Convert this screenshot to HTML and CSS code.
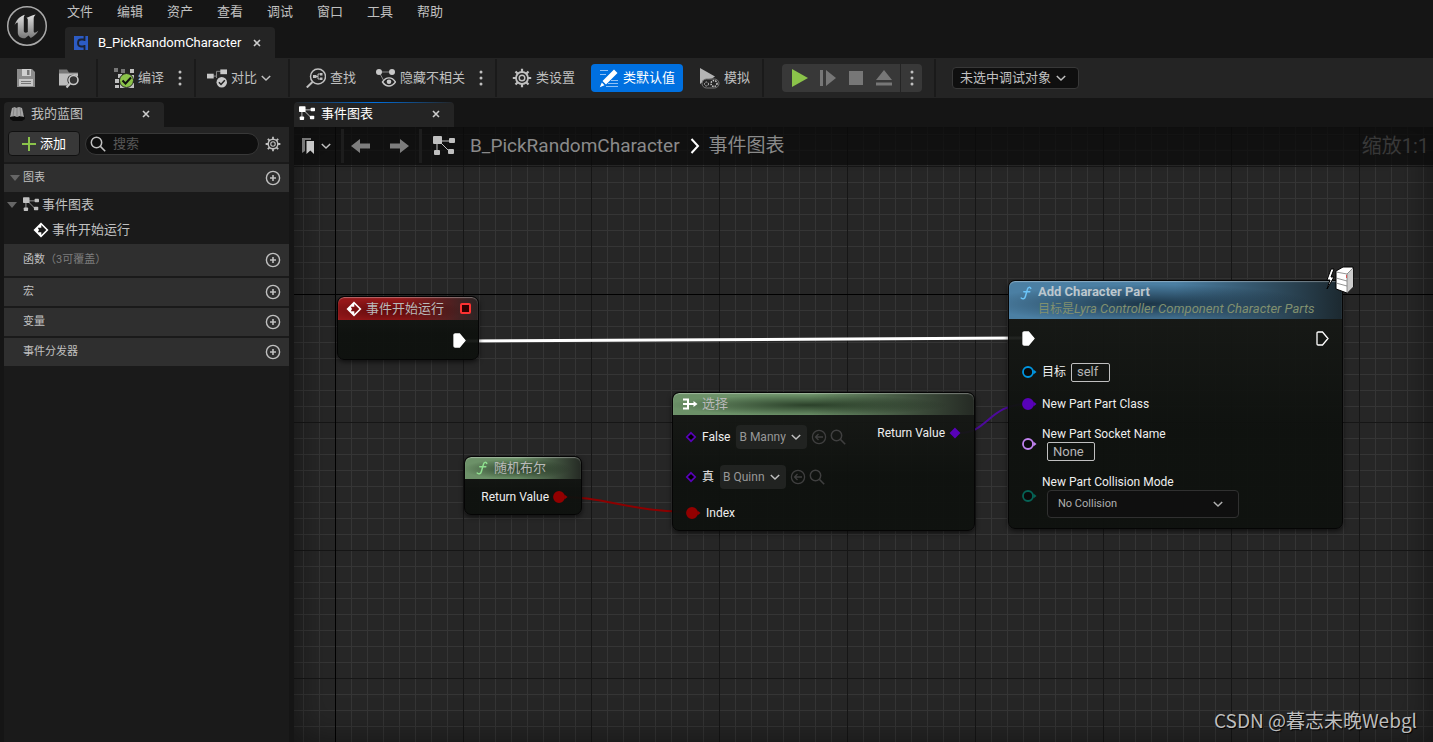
FILE: index.html
```html
<!DOCTYPE html>
<html lang="zh-CN">
<head>
<meta charset="utf-8">
<meta name="viewport" content="width=device-width, initial-scale=1">
<title>B_PickRandomCharacter</title>
<link rel="stylesheet" href="styles.css">
</head>
<body>
<svg class="sprite" aria-hidden="true">
  <symbol id="chevron" viewBox="0 0 10 10"><path d="M.8 3l4.200 4L9.200 3" fill="none" stroke="currentColor" stroke-width="1.500"/></symbol>
  <symbol id="close" viewBox="0 0 8 8"><path d="M1 1l6 6M7 1L1 7" stroke="currentColor" stroke-width="1.600"/></symbol>
  <symbol id="dots" viewBox="0 0 4 16"><circle cx="2" cy="2" r="1.500"/><circle cx="2" cy="8" r="1.500"/><circle cx="2" cy="14" r="1.500"/></symbol>
  <symbol id="graph" viewBox="0 0 22 20"><path d="M5 4l12 12M5 5h13M4 5v12" stroke="currentColor" fill="none" stroke-width="1"/><rect x="0" y="0" width="9" height="8" rx="1"/><rect x="16" y="2" width="6" height="5" rx="1"/><rect x="1" y="14" width="6" height="5" rx="1"/><rect x="15" y="13" width="6" height="5" rx="1"/></symbol>
  <symbol id="plus" viewBox="0 0 16 16"><circle cx="8" cy="8" r="6.600" fill="none" stroke="currentColor" stroke-width="1.400"/><path d="M8 5v6M5 8h6" stroke="currentColor" stroke-width="1.600"/></symbol>
  <symbol id="gear" viewBox="0 0 20 20"><g fill="none" stroke="currentColor"><circle cx="10" cy="10" r="6" stroke-width="1.800"/><circle cx="10" cy="10" r="2.800" stroke-width="1.400"/><path d="M10 .8v3.200M10 16v3.200M.8 10H4M16 10h3.200M3.500 3.500l2.300 2.300M14.200 14.200l2.300 2.300M3.500 16.500l2.300-2.300M14.200 5.800l2.300-2.300" stroke-width="2.200"/></g></symbol>
  <symbol id="search" viewBox="0 0 16 16"><g fill="none" stroke="currentColor" stroke-width="1.500"><circle cx="6.500" cy="6.500" r="5.200"/><path d="M10.400 10.400l4.800 4.800"/></g></symbol>
  <symbol id="back" viewBox="0 0 16 16"><g fill="none" stroke="currentColor" stroke-width="1.300"><circle cx="8" cy="8" r="6.600"/><path d="M12 8H5M7.500 5L4.500 8l3 3"/></g></symbol>
  <symbol id="event" viewBox="0 0 16 16"><path fill-rule="evenodd" d="M8 .5L15.500 8 8 15.500.5 8zM8.300 3L13.300 8l-5 5v-2.800H4.800L6 8 4.800 5.800h3.500z"/></symbol>
  <symbol id="func" viewBox="0 0 12 14"><path d="M10.800 2.400C10 .7 8 1 7.400 3.400L5.300 10.700C4.600 13 2.800 13.500 1.200 12M3.800 5.800h6" fill="none" stroke="currentColor" stroke-width="1.500" stroke-linecap="round"/></symbol>
  <symbol id="exec" viewBox="0 0 13 15"><path d="M1 2.200Q1 1 2.200 1H6.500L12 7.500 6.500 14H2.200Q1 14 1 12.800z" stroke="currentColor" stroke-width="1.300"/></symbol>
  <symbol id="pin" viewBox="0 0 16 14"><circle cx="7" cy="7" r="5" stroke="currentColor" stroke-width="1.800"/><path d="M12.400 4.500L15.500 7l-3.100 2.500z" fill="currentColor"/></symbol>
  <symbol id="diamond" viewBox="0 0 12 12"><path d="M6 1.800L10.200 6 6 10.200 1.800 6z" stroke="currentColor" stroke-width="1.700"/></symbol>
</svg>

<header class="titlebar">
  <svg class="logo" viewBox="0 0 42 42" aria-label="Unreal Engine">
    <defs><linearGradient id="metal" x2="0" y2="1"><stop stop-color="#e2e2e2"/><stop offset="1" stop-color="#777"/></linearGradient></defs>
    <circle cx="21" cy="21" r="19.300" fill="#1b1b1b" stroke="#a9a9a9" stroke-width="1.500"/>
    <path fill="url(#metal)" d="M8.500 20.500C10.500 14 14.800 11 19 9.800c-1.300 1.600-1.200 2.600-1.200 4.200V26c0 2 2.600 2.200 4 .9V14.700c0-1.200-.8-1.800-1.700-1.700 2.500-1 5.700-2.800 9.500-3.600-1.600 1.600-1.900 2.800-1.900 4.600V26.500c0 1.700 1.800 1.500 4.600-.7-1.500 3.200-4.200 5.100-7.500 7.200l-2.300-2.500-3.400 2.800c-4 .2-7-1.800-7.300-5.300V18.500c0-1.600-1.400-1.200-3.300 2z"/>
  </svg>
  <div class="title-main">
    <nav class="menu" aria-label="主菜单">
      <button>文件</button><button>编辑</button><button>资产</button><button>查看</button><button>调试</button><button>窗口</button><button>工具</button><button>帮助</button>
    </nav>
    <div class="asset-tab">
      <svg class="i14" viewBox="0 0 14 14"><path fill="#2c5bc4" d="M0 0h14v14H0z"/><path d="M10 3.500H7Q4 3.500 4 7t3 3.500h3M10.500 0v5M10.500 9v5" fill="none" stroke="#1b2233" stroke-width="1.800"/></svg>
      <span>B_PickRandomCharacter</span>
      <button class="close" aria-label="关闭"><svg><use href="#close"/></svg></button>
    </div>
  </div>
</header>

<div class="toolbar" role="toolbar">
  <div class="group g-file">
    <button aria-label="保存"><svg class="i18" viewBox="0 0 18 18"><path fill="#8c8c8c" d="M0 0h15l3 3v15H0z"/><path fill="#d0d0d0" d="M5 0h9v7H5z"/><path fill="#777" d="M10 1h2.500v5H10z"/><path fill="#c8c8c8" d="M2 10h14v7H2z"/><path stroke="#777" d="M4 12.500h10M4 14.500h10"/></svg></button>
    <button aria-label="浏览"><svg class="i21" viewBox="0 0 21 20"><path fill="#777" d="M0 1h8l2 3h9v3H0z"/><path fill="#bdbdbd" d="M0 5h19v3l-5-2c-5 0-7 5-4.500 9L8 17H0z"/><circle cx="14.500" cy="11.500" r="4.500" fill="#333" stroke="#c8c8c8" stroke-width="1.600"/><path stroke="#c8c8c8" stroke-width="2" d="M11 15l-3.500 4"/></svg></button>
  </div>
  <div class="group g-compile">
    <button class="tool"><svg class="i20" viewBox="0 0 20 20"><path fill="#777" d="M0 0h4v4H0zM7 1h4v4H7z"/><path fill="#c0c0c0" d="M16 1h4v4h-4zM4 6h4v4H4zM16 7h4v4h-4zM1 11h4v4H1zM1 17h4v3H1zM6 15h14v5H6zM10 6h5v4h-5z"/><circle cx="12.500" cy="12.500" r="7" fill="#8bc34a" stroke="#242424"/><path d="M8.500 12.500l3 3 5.500-6" fill="none" stroke="#111" stroke-width="2"/></svg>编译</button>
    <button class="more" aria-label="编译选项"><svg><use href="#dots"/></svg></button>
  </div>
  <div class="group g-diff">
    <button class="tool"><svg class="i20" viewBox="0 0 21 20"><path stroke="#888" fill="none" d="M5 8h5V3h5M10 6v4"/><rect y="5.500" width="7" height="5" fill="#c8c8c8"/><rect x="14" y="1" width="7" height="5" fill="#c8c8c8"/><circle cx="15.500" cy="14.500" r="5.500" fill="#c8c8c8"/><path d="M12.500 14.500l2.200 2.300 4-4.500" fill="none" stroke="#222" stroke-width="1.600"/></svg>对比<svg class="chev"><use href="#chevron"/></svg></button>
  </div>
  <div class="group g-find">
    <button class="tool"><svg class="i20" viewBox="0 0 20 20"><g fill="none" stroke="#c0c0c0" stroke-width="1.500"><circle cx="12" cy="8.500" r="7.500"/><path d="M6.500 14L.8 19.500" stroke-width="2"/><path d="M10 8.500h2V6h2.500M12 8.500V11h2.500" stroke-width="1"/></g><path fill="#c0c0c0" d="M7 7h3.500v3H7zM14 5h2.500v2.500H14zM14 9.500h2.500V12H14z"/></svg>查找</button>
    <button class="tool"><svg class="i20" viewBox="0 0 20 20"><path stroke="#888" fill="none" d="M3 4h13M3 4l5 9"/><circle cx="3" cy="4" r="3" fill="#c8c8c8"/><circle cx="16" cy="4" r="3" fill="#c8c8c8"/><path d="M6.500 14c3.500-5.500 9.500-5.500 13 0-3.500 5.300-9.500 5.300-13 0z" fill="#242424" stroke="#c8c8c8" stroke-width="1.400"/><circle cx="13" cy="13.800" r="2.300" fill="#c8c8c8"/></svg>隐藏不相关</button>
    <button class="more" aria-label="隐藏选项"><svg><use href="#dots"/></svg></button>
  </div>
  <div class="group g-class">
    <button class="tool"><svg class="i20"><use href="#gear"/></svg>类设置</button>
    <button class="tool primary"><svg class="i20" viewBox="0 0 20 20"><path stroke="#8fc0f6" d="M1 2.500h8M1 6.500h6M12 12.500h7M9 15.500h10M7 18.500h12"/><path fill="#fff" d="M15 1.500L18.500 5 7 16.500 3.500 13zM2.800 14.500L5.500 17.300.8 19.200z"/></svg>类默认值</button>
    <button class="tool"><svg class="i21" viewBox="0 0 21 21"><path fill="#b4b4b4" d="M1 0l15 8.500-3 2-6 1-6 4.500z"/><rect x="3" y="11" width="17" height="9" rx="4.500" fill="#242424" stroke="#777"/><g fill="none" stroke="#c8c8c8"><circle cx="7.500" cy="16" r="2" stroke-dasharray="1.500 1"/><circle cx="15" cy="15.500" r="3" stroke-dasharray="1.500 1" stroke-width="1.500"/></g></svg>模拟</button>
  </div>
  <div class="group g-play">
    <div class="play">
      <button aria-label="运行"><svg class="i18" viewBox="0 0 18 18"><path fill="#8bc34a" d="M1 0l16 9L1 18z"/></svg></button>
      <button aria-label="步进"><svg class="i16" viewBox="0 0 16 16"><path fill="#777" d="M0 0h3v16H0zM6 0l10 8-10 8z"/></svg></button>
      <button aria-label="停止"><svg class="i14" viewBox="0 0 14 14"><path fill="#777" d="M0 0h14v14H0z"/></svg></button>
      <button aria-label="弹出"><svg class="i16" viewBox="0 0 16 16"><path fill="#777" d="M8 0l8 10H0zM0 12.500h16v3H0z"/></svg></button>
      <button class="play-more" aria-label="运行选项"><svg><use href="#dots"/></svg></button>
    </div>
  </div>
  <label class="debug"><select aria-label="调试对象"><option>未选中调试对象</option></select><svg class="chev"><use href="#chevron"/></svg></label>
</div>

<main class="dock">
  <aside class="panel">
    <div class="tab"><svg class="i16" viewBox="0 0 16 16"><path fill="#0b0b0b" d="M1 8h14l1 5-3 2H4l-3-2z"/><path fill="#a5a5a5" d="M3 2l3-1 1 1 3-1 3 1 2 9-4-1-3 1-3-1-4 1z"/><path stroke="#777" stroke-width=".7" d="M5 2L4 11M8 2v9M11 2l1 9"/></svg><span>我的蓝图</span><button class="close" aria-label="关闭"><svg><use href="#close"/></svg></button></div>
    <div class="panel-tools">
      <button class="add"><svg class="i14" viewBox="0 0 14 14"><path d="M7 0v14M0 7h14" stroke="#8bc34a" stroke-width="2"/></svg>添加</button>
      <label class="search"><svg class="i16"><use href="#search"/></svg><input type="text" placeholder="搜索" aria-label="搜索"></label>
      <button aria-label="设置"><svg class="i16"><use href="#gear"/></svg></button>
    </div>
    <div class="section"><svg class="tri" viewBox="0 0 10 6"><path d="M0 0h10L5 6z"/></svg><span>图表</span><button aria-label="添加图表"><svg class="i16"><use href="#plus"/></svg></button></div>
    <ul class="tree">
      <li><svg class="tri" viewBox="0 0 10 6"><path d="M0 0h10L5 6z"/></svg><svg class="g-icon"><use href="#graph"/></svg>事件图表</li>
      <li class="child"><svg class="i16 white"><use href="#event"/></svg>事件开始运行</li>
    </ul>
    <div class="section tall"><span>函数<span class="note">（3可覆盖）</span></span><button aria-label="添加函数"><svg class="i16"><use href="#plus"/></svg></button></div>
    <div class="section"><span>宏</span><button aria-label="添加宏"><svg class="i16"><use href="#plus"/></svg></button></div>
    <div class="section"><span>变量</span><button aria-label="添加变量"><svg class="i16"><use href="#plus"/></svg></button></div>
    <div class="section"><span>事件分发器</span><button aria-label="添加事件分发器"><svg class="i16"><use href="#plus"/></svg></button></div>
  </aside>

  <section class="editor">
    <div class="tab active"><svg class="g-icon"><use href="#graph"/></svg><span>事件图表</span><button class="close" aria-label="关闭"><svg><use href="#close"/></svg></button></div>
    <div class="canvas">
      <svg class="wires" aria-hidden="true">
        <path class="wire exec-wire" d="M171 214L728 211"/>
        <path class="wire bool-wire" d="M272 370C310 370 340 385 396 385"/>
        <path class="wire class-wire" d="M666 306C694 306 695 277 734 277"/>
      </svg>

      <article class="node n-event">
        <h3 class="red"><svg class="i16 white"><use href="#event"/></svg><span>事件开始运行</span><i class="delegate"></i></h3>
        <div class="out-exec"><svg class="exec full"><use href="#exec"/></svg></div>
      </article>

      <article class="node n-random">
        <h3 class="green"><svg class="fn"><use href="#func"/></svg><span>随机布尔</span></h3>
        <div class="ret">Return Value<svg class="pin full p-bool"><use href="#pin"/></svg></div>
      </article>

      <article class="node n-select">
        <h3 class="green"><svg class="merge" viewBox="0 0 15 12"><path d="M0 1.500h5v9H0M0 6h9" fill="none" stroke="#fff" stroke-width="2"/><path fill="#fff" d="M10.500 3L14.500 6l-4 3V7H9V5h1.500z"/></svg><span>选择</span></h3>
        <div class="select-body">
          <div class="options">
            <div class="row"><svg class="dia p-class"><use href="#diamond"/></svg><label for="false">False</label><span class="asset"><select id="false"><option>B Manny</option></select><svg class="chev"><use href="#chevron"/></svg></span><button aria-label="使用所选资产"><svg class="i16"><use href="#back"/></svg></button><button aria-label="浏览资产"><svg class="i16"><use href="#search"/></svg></button></div>
            <div class="row"><svg class="dia p-class"><use href="#diamond"/></svg><label for="true">真</label><span class="asset"><select id="true"><option>B Quinn</option></select><svg class="chev"><use href="#chevron"/></svg></span><button aria-label="使用所选资产"><svg class="i16"><use href="#back"/></svg></button><button aria-label="浏览资产"><svg class="i16"><use href="#search"/></svg></button></div>
            <div class="row index"><svg class="pin full p-bool"><use href="#pin"/></svg>Index</div>
          </div>
          <div class="result">Return Value<svg class="dia full p-class"><use href="#diamond"/></svg></div>
        </div>
      </article>

      <article class="node n-add">
        <h3 class="blue"><svg class="fn"><use href="#func"/></svg><span><b>Add Character Part</b><small>目标是<i>Lyra Controller Component Character Parts</i></small></span></h3>
        <div class="exec-row"><svg class="exec full"><use href="#exec"/></svg><svg class="exec"><use href="#exec"/></svg></div>
        <div class="prop self"><svg class="pin p-obj"><use href="#pin"/></svg><label for="self">目标</label><input id="self" class="w-self" type="text" value="self"></div>
        <div class="prop cls"><svg class="pin full p-class"><use href="#pin"/></svg><span>New Part Part Class</span></div>
        <div class="prop sock"><svg class="pin p-name"><use href="#pin"/></svg><div><label for="socket">New Part Socket Name</label><input id="socket" class="w-none" type="text" value="None"></div></div>
        <div class="prop coll"><svg class="pin p-enum"><use href="#pin"/></svg><div><label for="mode">New Part Collision Mode</label><span class="mode"><select id="mode"><option>No Collision</option></select><svg class="chev"><use href="#chevron"/></svg></span></div></div>
        <svg class="server" viewBox="0 0 28 28"><path fill="#fff" stroke="#000" d="M5 3L1 14h3L1 23 8 11H5l3-8z"/><path fill="#fff" stroke="#000" d="M10 5l7-4h10v20l-6 6-11-4z"/><path fill="#ccc" d="M21 8l6-6v19l-6 6z"/><path stroke="#777" stroke-width=".8" fill="none" d="M10 6l11 2v18M10 12l11 3M10 17l11 3M21 8l6-6"/><path stroke="#d55" d="M20.500 9v3"/></svg>
      </article>

      <div class="vignette"></div>
      <nav class="crumbs" aria-label="图表导航">
        <button class="bookmark" aria-label="书签"><svg viewBox="0 0 13 16"><path fill="#777" d="M0 0h9v2H3v11l-3 2z"/><path fill="#c8c8c8" d="M4.500 3H12v13l-3.700-3.500L4.500 16z"/></svg><svg class="chev"><use href="#chevron"/></svg></button>
        <button class="nav-arrow" aria-label="后退"><svg viewBox="0 0 19 14"><path d="M0 7l9-7v4.500h10v5H9V14z"/></svg></button>
        <button class="nav-arrow next" aria-label="前进"><svg viewBox="0 0 19 14"><path d="M19 7l-9-7v4.500H0v5h10V14z"/></svg></button>
        <span class="path"><svg class="g-big"><use href="#graph"/></svg><a href="#">B_PickRandomCharacter</a><svg class="gt" viewBox="0 0 10 16"><path d="M1.500 1l6.500 7-6.500 7" fill="none" stroke="#fff" stroke-width="2"/></svg><a href="#">事件图表</a></span>
        <span class="zoom">缩放1:1</span>
      </nav>
      <div class="watermark">CSDN @暮志未晚Webgl</div>
    </div>
  </section>
</main>
</body>
</html>
```
FILE: styles.css
```css
* { box-sizing: border-box; }
body {
  margin: 0;
  height: 100vh;
  display: flex;
  flex-direction: column;
  overflow: hidden;
  background: #151515;
  color: #c0c0c0;
  font: 13px/20px Roboto, "Noto Sans CJK SC", sans-serif;
}
button, select, input { font: inherit; color: inherit; border: 0; padding: 0; margin: 0; background: none; }
select { appearance: none; outline: 0; }
input { outline: 0; min-width: 0; }
button { display: flex; align-items: center; flex: none; white-space: nowrap; }
svg { display: block; flex: none; fill: currentColor; }
h3, ul { margin: 0; padding: 0; list-style: none; font-weight: 400; font-size: 13px; }
.sprite { position: absolute; width: 0; height: 0; }
.i14 { width: 14px; height: 14px; }
.i16 { width: 16px; height: 16px; }
.i18 { width: 18px; height: 18px; }
.i20 { width: 20px; height: 20px; }
.i21 { width: 21px; height: 21px; }
.chev { width: 10px; height: 10px; pointer-events: none; }
.white { color: #fff; }
.close svg { width: 8px; height: 8px; }

/* Title bar */
.titlebar { display: flex; height: 58px; flex: none; }
.logo { width: 42px; height: 42px; margin: 5px 17px 0 6px; }
.title-main { display: flex; flex-direction: column; justify-content: space-between; }
.menu { display: flex; gap: 24px; padding: 2px 2px 0; }
.asset-tab {
  display: flex;
  align-items: center;
  width: 210px;
  height: 31px;
  padding: 0 14px 0 9px;
  background: #242424;
  border-radius: 4px 4px 0 0;
  color: #fff;
}
.asset-tab span { margin: 0 auto 0 10px; }
.asset-tab .close { color: #ccc; }

/* Toolbar */
.toolbar { display: flex; align-items: center; height: 40px; flex: none; background: #242424; }
.group { display: flex; align-items: center; height: 38px; border-right: 2px solid #1a1a1a; }
.tool { gap: 4px; }
.more svg, .play-more svg { width: 4px; height: 16px; }
.g-file { padding: 0 16px 0 17px; gap: 24px; }
.g-compile { padding: 0 12px 0 16px; gap: 14px; }
.g-diff { padding: 0 17px 0 11px; }
.g-find { padding: 0 12px 0 16px; }
.g-find .tool + .tool { margin: 0 14px 0 20px; }
.g-class { padding: 0 12px 0 15px; gap: 16px; }
.primary { height: 28px; padding: 0 8px; border-radius: 4px; background: #0070e0; color: #fff; }
.g-play { padding: 0 12px 0 18px; }
.play { display: flex; height: 28px; padding-left: 4px; background: #383838; border-radius: 4px; }
.play button { width: 28px; justify-content: center; }
.play .play-more { width: 22px; margin-left: 2px; border-left: 1px solid #242424; }
.debug {
  display: flex;
  align-items: center;
  gap: 4px;
  height: 22px;
  margin-left: 16px;
  padding: 0 12px 0 7px;
  background: #0f0f0f;
  border: 1px solid #383838;
  border-radius: 4px;
}

/* Docked panels */
.dock { display: flex; flex: 1; min-height: 0; gap: 5px; padding: 4px 0 0 4px; }
.panel { width: 285px; flex: none; background: #1a1a1a linear-gradient(#151515, #151515) 0 0 / 100% 25px no-repeat; }
.tab {
  display: flex;
  align-items: center;
  width: 160px;
  height: 25px;
  padding: 0 14px 2px 5px;
  background: #242424;
  border-radius: 4px 4px 0 0;
}
.tab span { margin: 0 auto 0 6px; }
.tab.active { color: #fff; background: linear-gradient(90deg, #242424, #0070e0, #242424) 0 0 / 100% 1px no-repeat #242424; }
.tab .close { color: #ccc; }
.panel-tools { display: flex; align-items: center; height: 35px; padding: 0 8px 2px 4px; background: #242424; }
.add {
  gap: 4px;
  width: 72px;
  height: 25px;
  justify-content: center;
  color: #fff;
  background: #383838;
  border: 1px solid #111;
  border-radius: 4px;
}
.search {
  display: flex;
  flex: 1;
  align-items: center;
  gap: 7px;
  min-width: 0;
  height: 22px;
  margin: 0 6px 0 5px;
  padding-left: 4px;
  background: #0f0f0f;
  border: 1px solid #383838;
  border-radius: 11px;
}
.search input { flex: 1; }
.search input::placeholder { color: #575757; }
.tri { width: 10px; height: 6px; color: #666; }
.section {
  display: flex;
  align-items: center;
  justify-content: space-between;
  height: 28px;
  margin-top: 2px;
  padding: 0 8px 0 19px;
  background: #2f2f2f;
  font-size: 11px;
}
.section .tri { margin-left: -13px; margin-right: 3px; }
.section .tri + span { margin-right: auto; }
.note { color: #7d7d7d; }
.tall { height: 32px; margin-top: 0; }
.g-icon { width: 16px; height: 15px; }
.tree { height: 52px; }
.tree li { display: flex; align-items: center; height: 25px; padding-left: 3px; gap: 3px; }
.tree .g-icon { margin-left: 3px; }
.tree .child { padding-left: 29px; }

/* Graph editor */
.editor { flex: 1; display: flex; flex-direction: column; min-width: 0; }
.canvas {
  position: relative;
  flex: 1;
  overflow: hidden;
  background-color: #262626;
  background-image:
    linear-gradient(#000, #000), linear-gradient(#000, #000),
    linear-gradient(90deg, #161616 1px, transparent 1px),
    linear-gradient(#161616 1px, transparent 1px),
    linear-gradient(90deg, #353535 1px, transparent 1px),
    linear-gradient(#353535 1px, transparent 1px);
  background-size: 1px 100%, 100% 1px, 128px 128px, 128px 128px, 16px 16px, 16px 16px;
  background-position: 41px 0, 0 167px, 41px 39px, 41px 39px, 41px 39px, 41px 39px;
  background-repeat: no-repeat, no-repeat, repeat, repeat, repeat, repeat;
}
.vignette { position: absolute; inset: 0; pointer-events: none; box-shadow: inset 0 0 36px rgba(0, 0, 0, .5); }
.crumbs {
  position: absolute;
  inset: 0 0 auto;
  display: flex;
  align-items: center;
  height: 38px;
  padding: 0 4px 0 8px;
  background: rgba(10, 10, 10, .72);
  color: #8a8a8a;
  font-size: 19px;
}
.bookmark { height: 34px; gap: 6px; padding-right: 10px; border-right: 3px solid #1d1d1d; color: #c0c0c0; }
.bookmark svg:first-child { width: 13px; height: 16px; }
.nav-arrow { height: 34px; padding: 0 10px 0 7px; color: #7d7d7d; }
.nav-arrow svg { width: 19px; height: 14px; }
.nav-arrow.next { padding: 0 10px; border-right: 3px solid #1d1d1d; }
.path { display: flex; align-items: center; }
.path a { color: inherit; text-decoration: none; }
.g-big { width: 22px; height: 20px; margin: 0 15px 0 11px; color: #c0c0c0; }
.gt { width: 10px; height: 16px; margin: 0 9px 0 10px; }
.zoom { margin-left: auto; color: #383838; font-size: 20px; }
.watermark {
  position: absolute;
  right: 16px;
  bottom: 10px;
  font: 19px/24px "Noto Sans CJK SC", sans-serif;
  color: #bdbdbd;
  text-shadow: 1px 1px 1px #000;
}
.wires { position: absolute; inset: 0; width: 100%; height: 100%; }
.wire { fill: none; stroke-width: 2; }
.exec-wire { stroke: #fff; stroke-width: 3; }
.bool-wire { stroke: #8c0000; }
.class-wire { stroke: #4d0a9c; }

/* Nodes */
.node {
  position: absolute;
  overflow: hidden;
  background: linear-gradient(rgba(24, 26, 23, .94), rgba(14, 17, 14, .95) 60%);
  border: 1px solid #050505;
  border-radius: 7px;
  box-shadow: 0 2px 5px rgba(0, 0, 0, .6);
  color: #eee;
  font-size: 12px;
}
.node h3 {
  display: flex;
  align-items: center;
  height: 22px;
  color: #b9b9b9;
  border-radius: 6px 6px 0 0;
  box-shadow: inset 0 1px 1px rgba(255, 255, 255, .35);
}
.node .red { height: 23px; background: radial-gradient(ellipse at 38% 60%, rgba(50, 0, 0, .55), transparent 60%), linear-gradient(90deg, #951719 45%, #2b2525); }
.green { background: radial-gradient(ellipse at 45% 55%, rgba(15, 30, 15, .7), transparent 60%), linear-gradient(90deg, #6c9168 45%, #252a24); }
.blue { background: radial-gradient(ellipse at 42% 60%, rgba(12, 28, 40, .75), transparent 60%), linear-gradient(90deg, #4b7fa3 50%, #1c2930); }
.fn { width: 12px; height: 14px; }
.pin { width: 16px; height: 14px; fill: #0a0a0a; }
.dia { width: 12px; height: 12px; fill: #000; }
.exec { width: 13px; height: 15px; fill: none; color: #fff; }
.full { fill: currentColor; }
.p-bool { color: #930000; }
.p-class { color: #5802b8; }
.p-obj { color: #0095e0; }
.p-name { color: #c183f0; }
.p-enum { color: #066356; }

.n-event { left: 43px; top: 169px; width: 142px; height: 64px; }
.n-event h3 { padding: 0 7px 0 8px; gap: 4px; }
.delegate { width: 11px; height: 11px; margin-left: auto; border: 2px solid #ff3232; border-radius: 2px; background: #300; }
.out-exec { display: flex; justify-content: flex-end; padding: 13px 12px 0; }

.n-random { left: 170px; top: 329px; width: 118px; height: 59px; }
.n-random h3 { padding-left: 11px; gap: 6px; }
.green .fn { color: #8fe08f; }
.ret { display: flex; align-items: center; justify-content: flex-end; gap: 3px; padding: 8px 13px 0 0; }

.n-select { left: 378px; top: 265px; width: 303px; height: 139px; }
.n-select h3 { padding-left: 10px; gap: 4px; }
.merge { width: 15px; height: 12px; }
.select-body { display: flex; justify-content: space-between; padding: 10px 13px 0 12px; }
.row { display: flex; align-items: center; height: 24px; margin-bottom: 16px; }
.row label { margin: 0 6px 0 5px; }
.row button { color: #3f3f3f; }
.row button + button { margin-left: 3px; }
.asset { display: flex; align-items: center; gap: 5px; height: 24px; padding: 0 6px 0 3px; border-radius: 4px; background: #212321; color: #989898; }
.asset .chev { color: #c0c0c0; }
.asset + button { margin-left: 4px; }
.index { gap: 5px; height: 16px; }
.result { display: flex; align-items: center; gap: 4px; height: 16px; }

.n-add { left: 714px; top: 153px; width: 335px; height: 249px; overflow: visible; }
.n-add h3 { height: 38px; padding-left: 11px; gap: 6px; align-items: flex-start; }
.blue .fn { margin-top: 5px; color: #6cc4f8; }
.blue span { display: flex; flex-direction: column; padding-top: 3px; line-height: 16px; }
.blue b { color: #bcc7ce; font-size: 13px; }
.blue small { color: #81906f; font-size: 12px; line-height: 18px; }
.blue small i { font-size: 13px; }
.exec-row { display: flex; justify-content: space-between; padding: 12px 13px 0; }
.prop { display: flex; align-items: center; gap: 5px; padding-left: 12px; }
.prop label { display: block; line-height: 16px; }
.prop input { display: block; height: 19px; padding: 0 5px; border: 1px solid #c0c0c0; border-radius: 2px; color: #b5b5b5; font-size: 13px; background: transparent; }
.w-self { width: 39px; }
.w-none { width: 48px; }
.prop div > input, .mode { margin-left: 5px; }
.self { margin-top: 16px; height: 20px; }
.cls { margin-top: 12px; height: 20px; }
.sock { margin-top: 12px; height: 35px; }
.coll { margin-top: 13px; height: 44px; }
.mode {
  display: flex;
  align-items: center;
  width: 192px;
  height: 28px;
  padding: 0 15px 0 10px;
  background: #0f0f0f;
  border: 1px solid #303030;
  border-radius: 4px;
  color: #b0b0b0;
  font-size: 11px;
}
.mode select { flex: 1; }
.server { position: absolute; right: -12px; top: -15px; width: 28px; height: 28px; }
```
